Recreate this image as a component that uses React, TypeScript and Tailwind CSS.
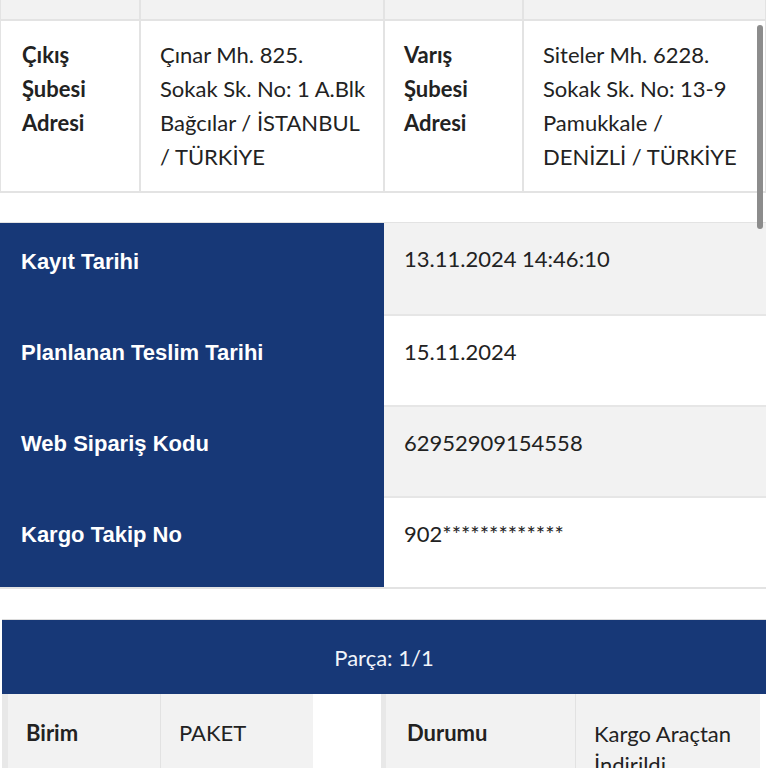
import React from "react";

const rows = [
  { label: "Kayıt Tarihi", value: "13.11.2024 14:46:10" },
  { label: "Planlanan Teslim Tarihi", value: "15.11.2024" },
  { label: "Web Sipariş Kodu", value: "62952909154558" },
  { label: "Kargo Takip No", value: "902*************" },
];

const App = () => {
  return (
    <div className="relative h-[768px] w-[768px] overflow-hidden bg-white text-[#222] font-['Lato',_'Noto_Sans',_sans-serif]">
      {/* adres tablosu */}
      <div className="w-[766px] border-l border-r border-[#e3e3e3]">
        <div className="grid grid-cols-[140px_244px_139px_1fr] h-[21px] bg-[#f2f2f2] border-b-2 border-[#e3e3e3]">
          <div className="border-r-2 border-[#e3e3e3]" />
          <div className="border-r-2 border-[#e3e3e3]" />
          <div className="border-r-2 border-[#e3e3e3]" />
          <div />
        </div>
        <div className="grid grid-cols-[140px_244px_139px_1fr] h-[172px] border-b-2 border-[#e3e3e3] text-[22px] leading-[34px]">
          <div className="border-r-2 border-[#e3e3e3] pl-[21px] pt-[17px] font-bold">
            Çıkış
            <br />
            Şubesi
            <br />
            Adresi
          </div>
          <div className="border-r-2 border-[#e3e3e3] pl-[19px] pr-[6px] pt-[17px]">
            Çınar Mh. 825.
            <br />
            Sokak Sk. No: 1 A.Blk
            <br />
            Bağcılar / İSTANBUL
            <br />/ TÜRKİYE
          </div>
          <div className="border-r-2 border-[#e3e3e3] pl-[19px] pt-[17px] font-bold">
            Varış
            <br />
            Şubesi
            <br />
            Adresi
          </div>
          <div className="pl-[19px] pr-[14px] pt-[17px]">
            Siteler Mh. 6228.
            <br />
            Sokak Sk. No: 13-9
            <br />
            Pamukkale /
            <br />
            DENİZLİ / TÜRKİYE
          </div>
        </div>
      </div>

      {/* bilgi tablosu */}
      <div className="mt-[29px] w-[766px] border-t border-b-2 border-[#e3e3e3]">
        {rows.map((r, i) => (
          <div key={r.label} className="grid grid-cols-[384px_1fr] h-[91px]">
            <div className="bg-[#173877] pl-[21px] pt-[22px] text-[22px] font-bold text-white font-['Liberation_Sans',_Arial,_sans-serif]">
              {r.label}
            </div>
            <div
              className={`pl-[20px] pt-[19px] text-[22px] ${i % 2 === 0 ? "bg-[#f2f2f2]" : "bg-white"} ${i > 0 ? "border-t-2 border-[#e6e6e6]" : ""}`}
            >
              {r.value}
            </div>
          </div>
        ))}
      </div>

      {/* parça tablosu */}
      <div className="mt-[30px] ml-[2px] w-[764px] border-t border-[#dcdcdc]">
        <div className="flex h-[74px] items-center justify-center bg-[#173877] text-[22px] text-[#f1f4fa]">
          Parça: 1/1
        </div>
        <div className="flex h-[80px] text-[22px]">
          <div className="flex w-[379px] border-l-[6px] border-[#e8e8e8]">
            <div className="w-[152px] bg-[#f2f2f2] pl-[18px] pt-[22px] font-bold">Birim</div>
            <div className="w-[153px] border-l border-[#e2e2e2] bg-[#f2f2f2] pl-[18px] pt-[22px]">PAKET</div>
            <div className="flex-1 bg-white" />
          </div>
          <div className="flex flex-1 border-l-[5px] border-[#e8e8e8]">
            <div className="w-[189px] bg-[#f2f2f2] pl-[21px] pt-[22px] font-bold">Durumu</div>
            <div className="w-[185px] border-l border-[#e2e2e2] bg-[#f2f2f2] pl-[18px] pt-[24px] leading-[31px]">
              Kargo Araçtan İndirildi
            </div>
            <div className="flex-1 bg-white" />
          </div>
        </div>
      </div>

      {/* kaydırma çubuğu */}
      <div className="absolute left-[757px] top-[25px] h-[204px] w-[6px] rounded-full bg-[#8c8c8c]" />
    </div>
  );
};

export default App;
